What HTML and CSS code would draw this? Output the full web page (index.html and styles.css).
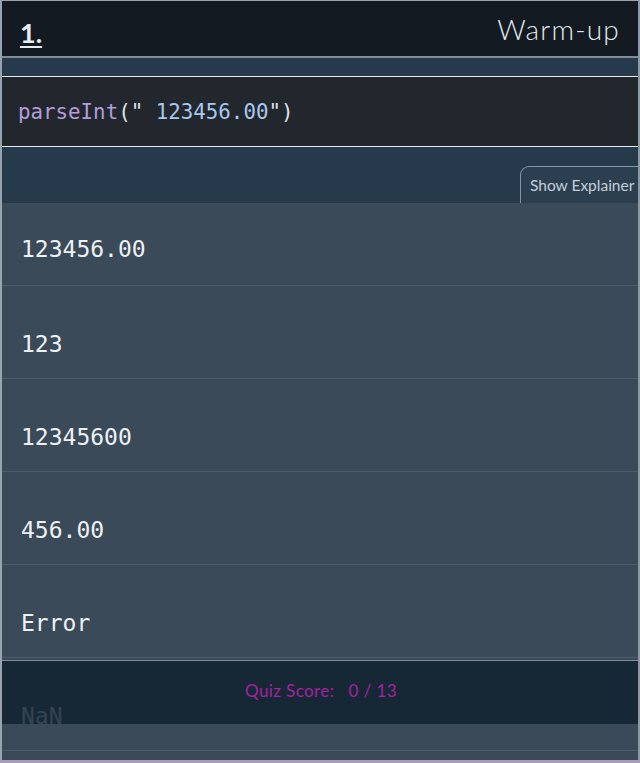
FILE: index.html
```html
<!DOCTYPE html>
<html>
<head>
<meta charset="utf-8">
<link rel="stylesheet" href="styles.css">
</head>
<body>
<div class="frame">
  <header class="top">
    <span class="num">1.</span>
    <span class="title">Warm-up</span>
  </header>
  <div class="band"></div>
  <div class="code"><span class="fn">parseInt</span><span class="pun">("</span><span class="str"> 123456.00</span><span class="pun">")</span></div>
  <div class="tabbar"><div class="tab">Show Explainer</div></div>
  <ul class="opts">
    <li class="opt first">123456.00</li>
    <li class="opt">123</li>
    <li class="opt">12345600</li>
    <li class="opt">456.00</li>
    <li class="opt">Error</li>
    <li class="opt">NaN</li>
    <li class="opt"></li>
  </ul>
  <footer class="score">Quiz Score:&nbsp;&nbsp; 0 / 13</footer>
</div>
</body>
</html>
```
FILE: styles.css
```css
html, body {
  margin: 0;
  padding: 0;
  background: #a99cba;
}
body {
  width: 640px;
  height: 763px;
  overflow: hidden;
}
.frame {
  position: relative;
  box-sizing: border-box;
  width: 640px;
  height: 760px;
  border-top: 1px solid #9aa3ad;
  border-left: 2px solid #97a3af;
  border-right: 2px solid #8d99a5;
  background: #3a4a58;
  overflow: hidden;
  font-family: Lato, "Open Sans", sans-serif;
}
.top {
  height: 55px;
  background: #131a21;
  display: flex;
  align-items: center;
  justify-content: space-between;
  padding: 0 18px 0 18px;
  border-bottom: 2px solid #7f8d99;
}
.num {
  color: #e8ecef;
  font-weight: 700;
  font-size: 27px;
  text-decoration: underline;
  text-underline-offset: 3px;
  padding-top: 8px;
}
.title {
  color: #e4e8ec;
  font-weight: 300;
  font-size: 28px;
  letter-spacing: 1.2px;
}
.band {
  height: 18px;
  background: #263a4b;
  border-bottom: 1px solid #e6ebef;
}
.code {
  height: 69px;
  background: #22272e;
  border-bottom: 1px solid #e6ebef;
  font-family: "DejaVu Sans Mono", monospace;
  font-size: 20.8px;
  line-height: 71px;
  padding-left: 16px;
  white-space: pre;
}
.fn { color: #b39ddb; }
.pun { color: #dfe3e8; }
.str { color: #a9c7ec; }
.tabbar {
  height: 56px;
  background: #263a4b;
  display: flex;
  justify-content: flex-end;
  align-items: flex-end;
}
.tab {
  height: 37px;
  width: 118px;
  box-sizing: border-box;
  border: 1px solid #8795a4;
  border-bottom: none;
  border-right: none;
  border-top-left-radius: 9px;
  background: #2b3f50;
  color: #c3cfdb;
  font-size: 15.5px;
  line-height: 37px;
  padding-left: 9px;
  white-space: nowrap;
  overflow: hidden;
}
.opts {
  list-style: none;
  margin: 0;
  padding: 0;
}
.opt {
  box-sizing: border-box;
  height: 93px;
  padding: 43px 0 0 19px;
  border-bottom: 1px solid #4c5c6a;
  color: #eef1f4;
  font-family: "DejaVu Sans Mono", monospace;
  font-size: 23px;
  line-height: 30px;
}
.opt.first {
  height: 83px;
  padding-top: 31px;
}
.score {
  position: absolute;
  left: 0;
  right: 0;
  top: 659px;
  height: 64px;
  background: rgba(16, 33, 48, 0.84);
  border-top: 1px solid #7f8d99;
  box-sizing: border-box;
  color: #a5229f;
  font-family: Lato, sans-serif;
  font-size: 17px;
  letter-spacing: 0.4px;
  line-height: 60px;
  text-align: center;
  padding-left: 2px;
}
```
